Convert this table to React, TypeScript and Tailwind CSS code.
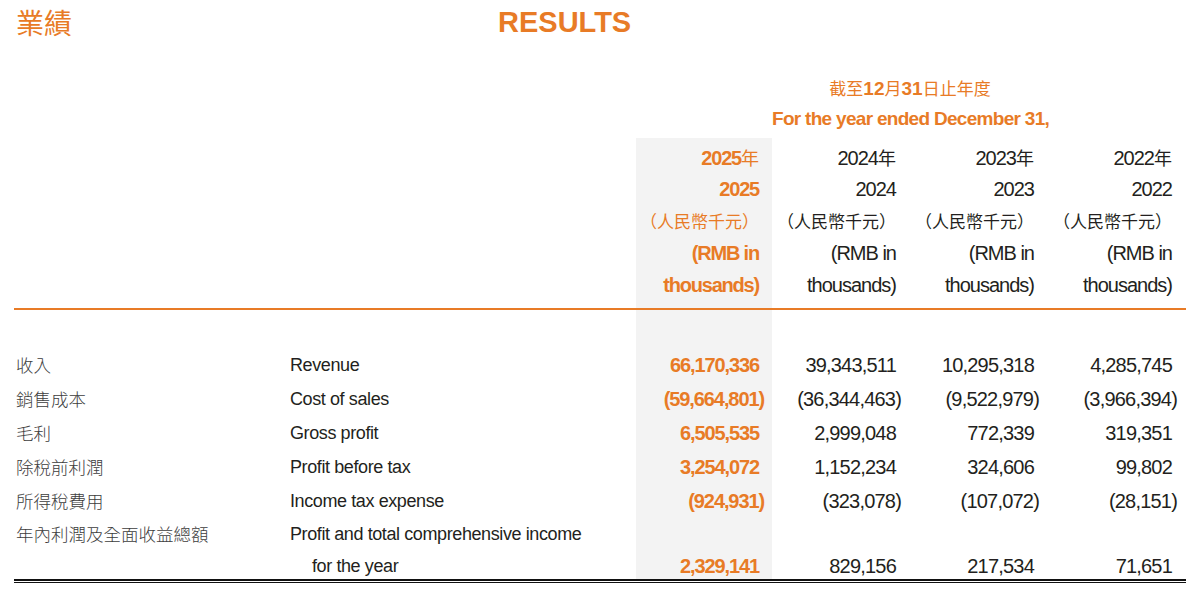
const en = "font-['Liberation_Sans','Noto_Sans_CJK_TC',sans-serif]";
const zh = "font-['Noto_Sans_CJK_TC',sans-serif]";

type Row = { zh: string; en: string[]; values: string[] };

const rows: Row[] = [
  { zh: '收入', en: ['Revenue'], values: ['66,170,336', '39,343,511', '10,295,318', '4,285,745'] },
  { zh: '銷售成本', en: ['Cost of sales'], values: ['(59,664,801)', '(36,344,463)', '(9,522,979)', '(3,966,394)'] },
  { zh: '毛利', en: ['Gross profit'], values: ['6,505,535', '2,999,048', '772,339', '319,351'] },
  { zh: '除稅前利潤', en: ['Profit before tax'], values: ['3,254,072', '1,152,234', '324,606', '99,802'] },
  { zh: '所得稅費用', en: ['Income tax expense'], values: ['(924,931)', '(323,078)', '(107,072)', '(28,151)'] },
  {
    zh: '年內利潤及全面收益總額',
    en: ['Profit and total comprehensive income', 'for the year'],
    values: ['2,329,141', '829,156', '217,534', '71,651'],
  },
];

const years = ['2025', '2024', '2023', '2022'];

// negative figures keep their closing bracket hanging past the column edge
function Num({ value }: { value: string }) {
  if (value.startsWith('(')) {
    return (
      <span>
        {value.slice(0, -1)}
        <span className="-mr-[5px]">)</span>
      </span>
    );
  }
  return <span>{value}</span>;
}

function YearColumn({ year, index }: { year: string; index: number }) {
  const current = index === 0;
  const track = current ? 'tracking-[-1.1px]' : 'tracking-[-0.8px]';
  return (
    <div
      className={`flex flex-col text-right ${en} ${
        current ? 'w-[136px] bg-[#f3f3f3] font-bold text-[#e87b26]' : 'w-[138px] text-[#231f20]'
      }`}
    >
      <div
        className={`h-[172px] border-b-2 border-[#e87b26] pt-[3px] text-[20px] leading-[32px] ${
          current ? 'pr-[13px] tracking-[-1.2px]' : 'pr-[14px] tracking-[-1px]'
        }`}
      >
        <div className="h-[32px]">
          {year}
          <span className={`${zh} text-[18px] font-normal tracking-normal`}>年</span>
        </div>
        <div className="h-[32px]">{year}</div>
        <div className={`${zh} h-[32px] text-[17px] font-normal tracking-normal`}>（人民幣千元）</div>
        <div className="h-[32px]">(RMB in</div>
        <div className="h-[32px]">thousands)</div>
      </div>
      <div className={`pt-[38px] text-[20px] ${track} ${current ? 'pr-[13px]' : 'pr-[14px]'}`}>
        {rows.map((row) =>
          row.en.length === 2 ? (
            <div key={row.zh} className="h-[61px] pt-[32px] leading-[32px]">
              <Num value={row.values[index]} />
            </div>
          ) : (
            <div key={row.zh} className="h-[34px] leading-[34px]">
              <Num value={row.values[index]} />
            </div>
          )
        )}
      </div>
    </div>
  );
}

export default function App() {
  return (
    <div className="h-[595px] w-[1200px] overflow-hidden bg-white">
      <div className="flex h-[44px] items-center">
        <div className={`${zh} w-[498px] pl-[16px] text-[28px] leading-none text-[#e87b26]`}>業績</div>
        <div className="font-['Liberation_Sans',sans-serif] text-[29px] font-bold leading-none text-[#e87b26]">
          RESULTS
        </div>
      </div>

      <div className="ml-[772px] w-[276px] pt-[29px] text-center text-[#e87b26]">
        <div className={`${zh} h-[30px] text-[17px] leading-[30px]`}>
          截至<span className={`${en} text-[19px] font-bold`}>12</span>月
          <span className={`${en} text-[19px] font-bold`}>31</span>日止年度
        </div>
        <div className={`${en} h-[35px] whitespace-nowrap text-[19px] font-bold leading-[32px] tracking-[-0.7px]`}>
          For the year ended December 31,
        </div>
      </div>

      <div className="ml-[14px] flex w-[1172px]">
        <div className={`w-[276px] ${zh} text-[17.5px] font-light text-[#3d3d3d]`}>
          <div className="h-[172px] border-b-2 border-[#e87b26]" />
          <div className="pl-[2px] pt-[38px]">
            {rows.map((row) => (
              <div key={row.zh} className={row.en.length === 2 ? 'h-[61px] leading-[32px]' : 'h-[34px] leading-[34px]'}>
                {row.zh}
              </div>
            ))}
          </div>
        </div>

        <div className={`w-[346px] ${en} text-[18px] tracking-[-0.4px] text-[#231f20]`}>
          <div className="h-[172px] border-b-2 border-[#e87b26]" />
          <div className="pt-[38px]">
            {rows.map((row) =>
              row.en.length === 2 ? (
                <div key={row.zh} className="h-[61px]">
                  <div className="h-[32px] leading-[32px]">{row.en[0]}</div>
                  <div className="h-[29px] pl-[22px] leading-[32px]">{row.en[1]}</div>
                </div>
              ) : (
                <div key={row.zh} className="h-[34px] leading-[34px]">
                  {row.en[0]}
                </div>
              )
            )}
          </div>
        </div>

        {years.map((year, i) => (
          <YearColumn key={year} year={year} index={i} />
        ))}
      </div>

      <div className="ml-[14px] w-[1172px]">
        <div className="h-[2px] bg-[#111]" />
        <div className="mt-[1px] h-[1px] bg-[#111]" />
      </div>
    </div>
  );
}
